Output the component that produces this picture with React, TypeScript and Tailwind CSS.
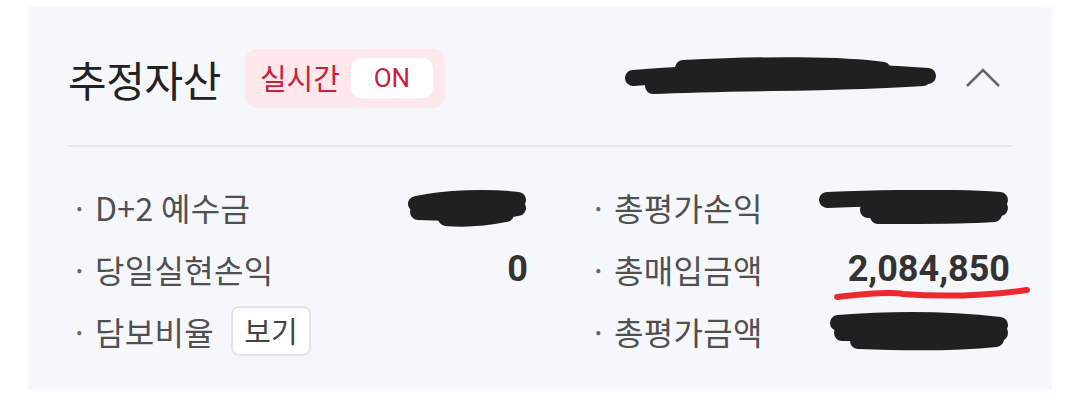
import React from 'react';

const FONT = { fontFamily: '"Noto Sans CJK KR", "Noto Sans", sans-serif' };
const NUM_FONT = { fontFamily: 'Roboto, "Noto Sans CJK KR", sans-serif' };

function Scribble({ width, height, strokes }: { width: number; height: number; strokes: string[] }) {
  return (
    <svg width={width} height={height} viewBox={`0 0 ${width} ${height}`} className="block">
      {strokes.map((d, i) => (
        <path key={i} d={d} fill="none" stroke="#202020" strokeWidth={16} strokeLinecap="round" strokeLinejoin="round" />
      ))}
    </svg>
  );
}

function Row({ label, extra, value }: { label: string; extra?: React.ReactNode; value?: React.ReactNode }) {
  return (
    <div className="flex h-[62px] items-center">
      <span className="w-[27px] pl-[3px] text-[30px] text-[#666]">·</span>
      <span className="text-[32px] tracking-[0.01em] text-[#505050]">{label}</span>
      {extra}
      <div className="ml-auto flex items-center">{value}</div>
    </div>
  );
}

function Value({ children }: { children: React.ReactNode }) {
  return (
    <span className="text-[36px] font-bold text-[#333]" style={NUM_FONT}>
      {children}
    </span>
  );
}

export default function App() {
  return (
    <div className="h-[406px] w-[1080px] bg-white pl-[28px] pt-[7px]" style={FONT}>
      <div className="h-[383px] w-[1024px] bg-[#f6f7fb] px-10">
        <div className="flex h-[138px] items-center pt-[4px]">
          <h2 className="text-[42px] font-normal tracking-[-0.01em] text-[#222]">추정자산</h2>
          <div className="ml-[24px] flex h-[59px] items-center rounded-[12px] bg-[#fde8eb] pl-[15px] pr-[12px]">
            <span className="text-[29px] text-[#c8203c]">실시간</span>
            <span className="ml-[11px] flex h-[40px] w-[82px] items-center justify-center rounded-[10px] bg-white text-[26px] text-[#c8203c]" style={NUM_FONT}>
              ON
            </span>
          </div>
          <div className="ml-auto">
            <Scribble
              width={316}
              height={44}
              strokes={['M10 22 C 80 16, 200 12, 305 20', 'M30 30 C 120 26, 220 28, 300 22', 'M60 12 C 140 8, 220 8, 260 14']}
            />
          </div>
          <svg width="36" height="24" viewBox="0 0 36 24" className="ml-[26px] mr-[11px]">
            <path d="M2 20 L18 4 L34 20" fill="none" stroke="#666" strokeWidth="2.6" />
          </svg>
        </div>
        <div className="h-[2px] bg-[#e6e7eb]" />
        <div className="grid grid-cols-[460px_423px] gap-x-[59px] pt-[29px]">
          <div className="flex flex-col">
            <Row
              label="D+2 예수금"
              value={<Scribble width={122} height={42} strokes={['M10 18 C 40 12, 80 10, 112 14', 'M12 26 C 50 28, 90 26, 112 22', 'M40 32 C 60 34, 80 32, 100 28']} />}
            />
            <Row label="당일실현손익" value={<Value>0</Value>} />
            <Row
              label="담보비율"
              extra={
                <span className="ml-[17px] flex h-[50px] w-[80px] items-center justify-center rounded-[8px] border-2 border-[#e3e4e8] bg-white text-[29px] text-[#444]">
                  보기
                </span>
              }
            />
          </div>
          <div className="flex flex-col">
            <Row
              label="총평가손익"
              value={<Scribble width={192} height={34} strokes={['M9 10 C 60 8, 130 6, 182 10', 'M50 20 C 100 22, 150 22, 182 18', 'M60 26 C 100 26, 150 26, 176 24']} />}
            />
            <div className="relative">
              <Row label="총매입금액" value={<Value>2,084,850</Value>} />
              <svg width="200" height="20" viewBox="0 0 200 20" className="absolute left-[246px] top-[46px]">
                <path d="M4 13 C 30 10, 60 8, 70 10 C 110 13, 150 12, 194 6" fill="none" stroke="#ec2a2e" strokeWidth="6" strokeLinecap="round" />
              </svg>
            </div>
            <Row
              label="총평가금액"
              value={<Scribble width={182} height={40} strokes={['M10 12 C 60 8, 120 8, 172 14', 'M14 22 C 70 22, 130 24, 172 22', 'M30 30 C 80 32, 130 32, 168 28']} />}
            />
          </div>
        </div>
      </div>
    </div>
  );
}
